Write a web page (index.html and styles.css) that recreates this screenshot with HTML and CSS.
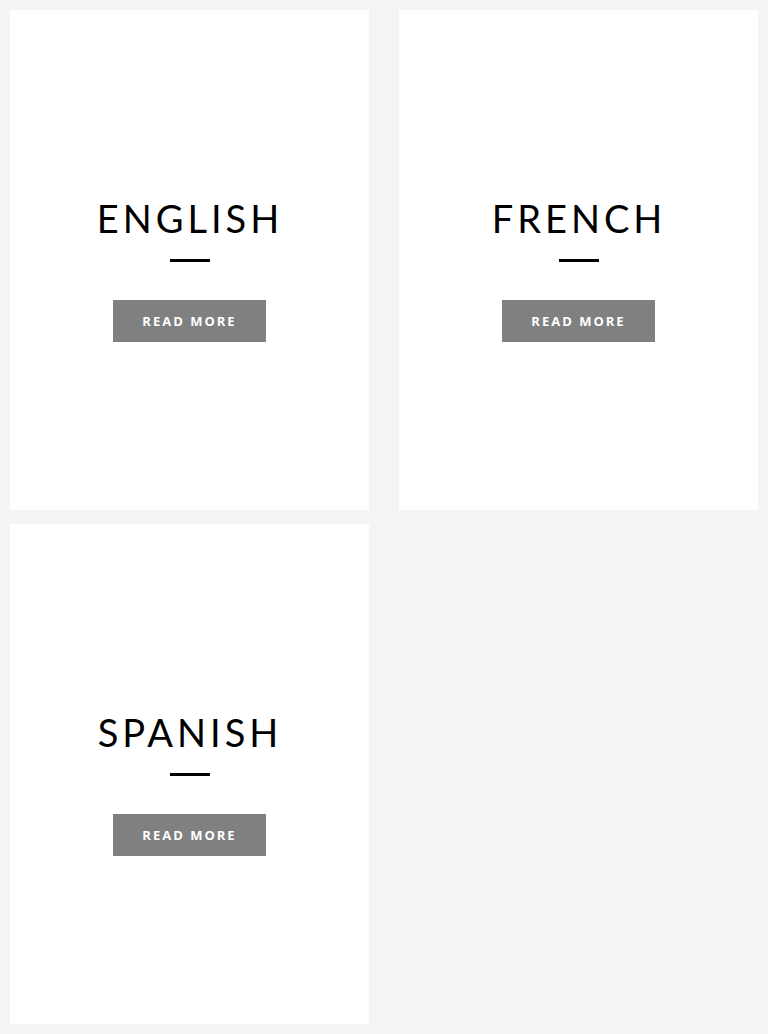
FILE: index.html
```html
<!DOCTYPE html>
<html lang="en">
<head>
    <meta charset="UTF-8">
    <meta name="viewport" content="width=device-width, initial-scale=1.0">
    <title>Languages</title>
    <link rel="stylesheet" href="styles.css">
</head>
<body>
    <div class="grid">
        <div class="card">
            <h2>English</h2>
            <span class="bar"></span>
            <a class="btn" href="#">Read more</a>
        </div>
        <div class="card">
            <h2>French</h2>
            <span class="bar"></span>
            <a class="btn" href="#">Read more</a>
        </div>
        <div class="card">
            <h2>Spanish</h2>
            <span class="bar"></span>
            <a class="btn" href="#">Read more</a>
        </div>
    </div>
</body>
</html>
```

FILE: styles.css
```css
body {
    margin: 0;
    padding: 10px;
    background-color: #f4f4f4;
    font-family: "Open Sans", Arial, sans-serif;
}
.grid {
    display: grid;
    grid-template-columns: 359px 359px;
    column-gap: 30px;
    row-gap: 14px;
}
.card {
    background-color: #fff;
    height: 500px;
    box-sizing: border-box;
    padding-top: 185px;
    display: flex;
    flex-direction: column;
    align-items: center;
}
.card h2 {
    margin: 0;
    font-family: Lato, "Open Sans", sans-serif;
    font-weight: 400;
    font-size: 38px;
    line-height: 46px;
    letter-spacing: 4px;
    padding-left: 1px;
    text-transform: uppercase;
    color: #000;
}
.card .bar {
    display: block;
    width: 40px;
    height: 3px;
    background-color: #000;
    margin-top: 18px;
}
.card .btn {
    display: flex;
    align-items: center;
    justify-content: center;
    margin-top: 38px;
    width: 153px;
    height: 42px;
    background-color: #808080;
    color: #fff;
    font-size: 13px;
    font-weight: 700;
    letter-spacing: 2px;
    text-transform: uppercase;
    text-decoration: none;
}
```
